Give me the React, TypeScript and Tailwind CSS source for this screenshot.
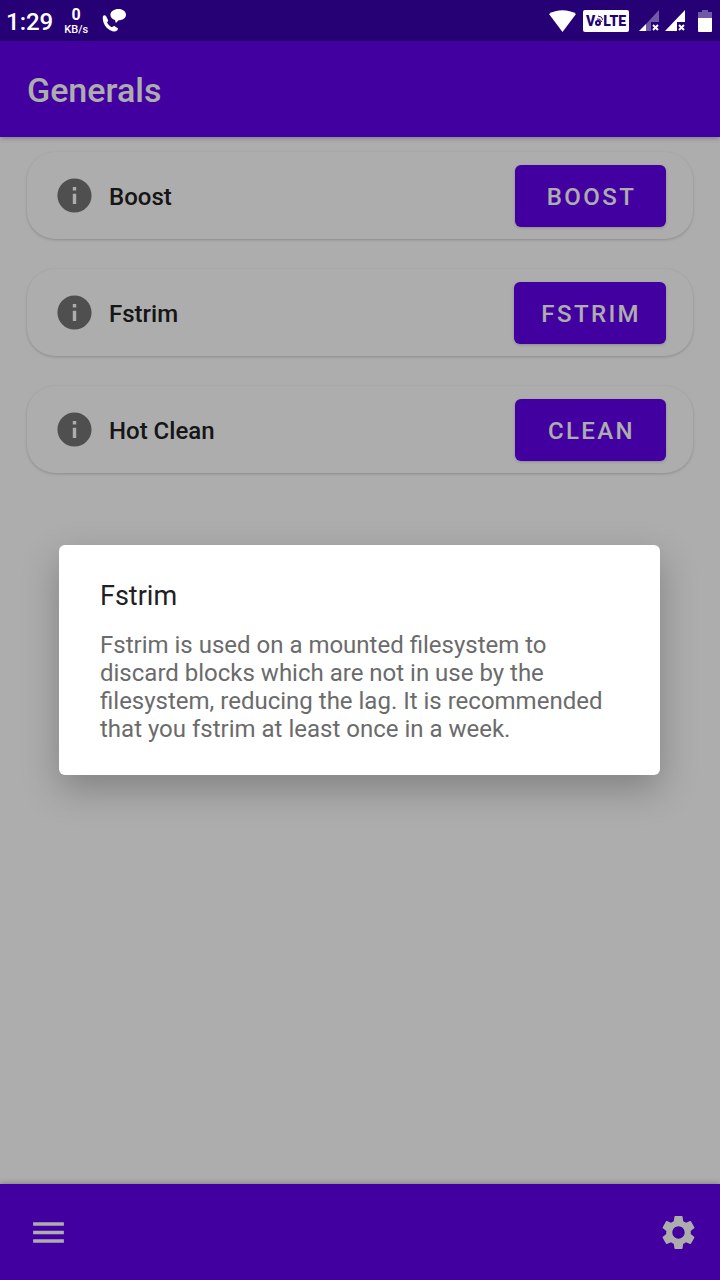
import React from "react";
import { MdInfo, MdMenu, MdSettings } from "react-icons/md";

const tools = [
  { name: "Boost", action: "BOOST" },
  { name: "Fstrim", action: "FSTRIM" },
  { name: "Hot Clean", action: "CLEAN" },
];

const StatusBar = () => {
  return (
    <div className="flex h-[41px] items-center justify-between bg-[#260075] pl-[6px] pr-2 text-white">
      <div className="flex items-center">
        <span className="pt-[2px] text-2xl font-medium">1:29</span>
        <div className="ml-[11px] flex flex-col items-center pt-[3px]">
          <span className="text-base leading-4 font-bold">0</span>
          <span className="text-[11px] leading-[14px] font-medium">KB/s</span>
        </div>
        <svg className="ml-[14px] h-6 w-6" viewBox="0 0 24 24" fill="#fff">
          <path d="M1 7C2 6 3 6 4 7L6 11C6.500 11.700 5.500 12.600 5 13.300C5.800 15.500 8 17.500 10 18.200C10.800 17.800 11.500 16.800 12.400 17.100L15.800 19.200C16.400 20.300 15 22.300 13 22.400C6.500 22.800-.5 15 1 7Z" />
          <path d="M16.500 0C20.800 0 24 2.600 24 5.800C24 9.200 20.500 11.300 16.700 11.300L13.800 14L13 11C10.200 10.200 8.400 8.500 8.400 5.800C8.400 2.600 12 0 16.500 0Z" />
        </svg>
      </div>
      <div className="flex items-center">
        <svg className="h-[22px] w-[27px]" viewBox="0 0 27 22" fill="#fff">
          <path d="M0 4C7.500-1 19.500-1 27 4L13.500 22Z" />
        </svg>
        <div className="ml-[7px] flex h-[22px] w-[46px] items-center justify-center rounded-xs bg-white text-[#260075]">
          <span className="text-sm font-black">V</span>
          <svg className="h-4 w-2" viewBox="0 0 8 16" fill="none" stroke="#260075">
            <circle cx="3" cy="10" r="2" strokeWidth="2" />
            <path d="M2 6Q5 5 7 9M3 3Q7 3 8 7" strokeWidth="1" />
          </svg>
          <span className="text-sm font-black">LTE</span>
        </div>
        <svg className="ml-[10px] h-[22px] w-[21px]" viewBox="0 0 21 22" fill="#fff">
          <path d="M20 0V12H12V21H7V14Z" opacity=".35" />
          <path d="M0 21L7 14V21Z" />
          <path d="M14 15L19 20M19 15L14 20" stroke="#fff" strokeWidth="2" />
        </svg>
        <svg className="ml-[5px] h-[22px] w-[21px]" viewBox="0 0 21 22" fill="#fff">
          <path d="M20 0V12H12V21H0Z" />
          <path d="M14 15L19 20M19 15L14 20" stroke="#fff" strokeWidth="2" />
        </svg>
        <svg className="ml-3 h-[22px] w-[14px]" viewBox="0 0 14 22" fill="#fff">
          <path d="M4 0H10V2H14V8H0V2H4Z" opacity=".35" />
          <path d="M0 8H14V21Q14 22 13 22H1Q0 22 0 21Z" />
        </svg>
      </div>
    </div>
  );
};

const ToolCard = ({ name, action }: { name: string; action: string }) => {
  return (
    <li className="flex h-[87px] items-center rounded-[28px] bg-white px-[27px] shadow-[0_1px_3px_rgba(0,0,0,0.2)]">
      <button aria-label={`About ${name}`} className="text-[#757575]">
        <MdInfo size={41} />
      </button>
      <span className="ml-[14px] flex-1 pt-[2px] text-2xl font-medium text-[#212121]">
        {name}
      </span>
      <button className="h-[62px] min-w-[151px] rounded-md bg-[#6200ee] pr-[25px] pl-[27px] pt-[2px] text-2xl font-medium tracking-widest text-white shadow-[0_1px_3px_rgba(0,0,0,0.2)]">
        {action}
      </button>
    </li>
  );
};

const App = () => {
  return (
    <div className="flex min-h-screen flex-col font-[Roboto,sans-serif]">
      <StatusBar />
      <div className="relative flex flex-1 flex-col bg-white">
        <header className="flex h-24 items-center bg-[#6200ee] px-[27px] pt-[2px] shadow-[0_1px_5px_rgba(0,0,0,0.3)]">
          <h1 className="text-[34px] font-medium text-white">Generals</h1>
        </header>
        <main className="flex-1">
          <ul className="flex flex-col gap-[30px] px-[27px] pt-[15px]">
            {tools.map((tool) => (
              <ToolCard key={tool.name} name={tool.name} action={tool.action} />
            ))}
          </ul>
        </main>
        <nav className="flex h-24 items-center justify-between bg-[#6200ee] pl-7 pr-[21px] text-white shadow-[0_-1px_5px_rgba(0,0,0,0.25)]">
          <button aria-label="Menu">
            <MdMenu size={41} />
          </button>
          <button aria-label="Settings">
            <MdSettings size={41} />
          </button>
        </nav>

        <div className="absolute inset-0 z-10 flex items-center justify-center bg-black/32 pr-[60px] pb-[2px] pl-[59px]">
          <div
            role="dialog"
            aria-labelledby="dialog-title"
            className="w-full rounded-md bg-white px-[41px] pt-[35px] pb-8 shadow-[0_14px_36px_rgba(0,0,0,0.25)]"
          >
            <h2 id="dialog-title" className="text-[27px] leading-8 text-[#212121]">
              Fstrim
            </h2>
            <p className="mt-[19px] text-2xl leading-7 text-[#6b6b6b]">
              Fstrim is used on a mounted filesystem to discard blocks which are
              not in use by the filesystem, reducing the lag. It is recommended
              that you fstrim at least once in a week.
            </p>
          </div>
        </div>
      </div>
    </div>
  );
};

export default App;
